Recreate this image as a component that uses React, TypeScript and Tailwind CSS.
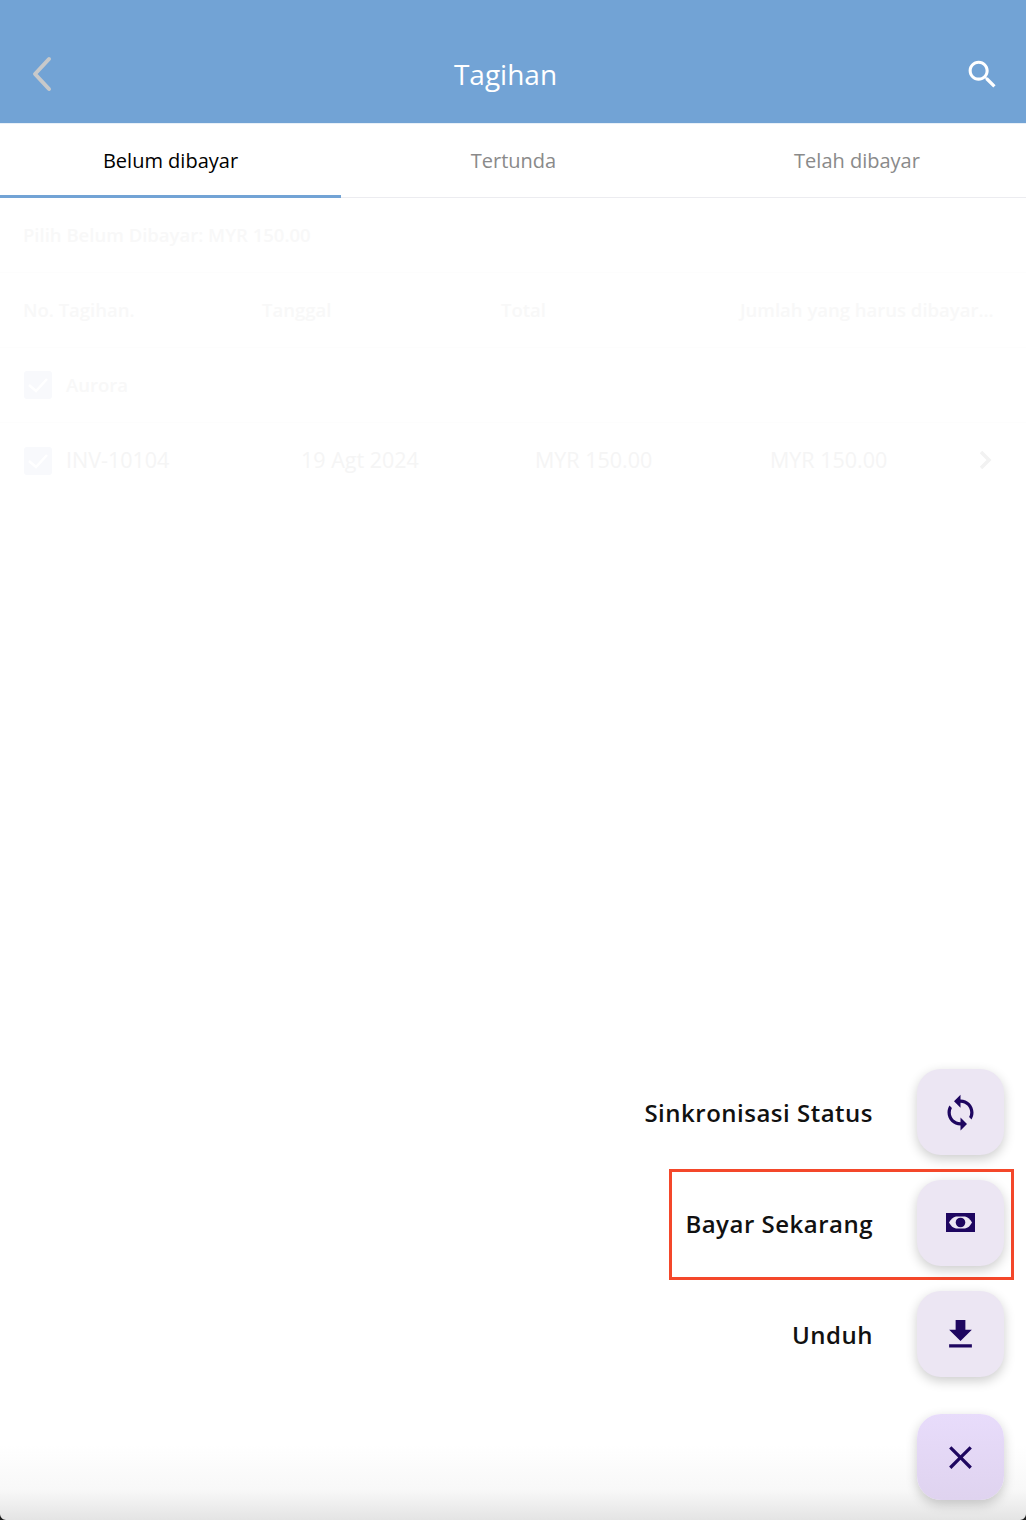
import React from 'react'

const tabs = ['Belum dibayar', 'Tertunda', 'Telah dibayar']

const actions = [
    {
        label: 'Sinkronisasi Status',
        highlight: false,
        icon: 'M12 4V1L8 5l4 4V6c3.31 0 6 2.69 6 6 0 1.01-.25 1.97-.7 2.8l1.46 1.46C19.54 15.03 20 13.57 20 12c0-4.42-3.58-8-8-8zm0 14c-3.31 0-6-2.69-6-6 0-1.01.25-1.97.7-2.8L5.24 7.74C4.46 8.97 4 10.43 4 12c0 4.42 3.58 8 8 8v3l4-4-4-4v3z',
    },
    {
        label: 'Bayar Sekarang',
        highlight: true,
        icon: '',
    },
    {
        label: 'Unduh',
        highlight: false,
        icon: 'M19 9h-4V3H9v6H5l7 7 7-7zM5 18v2h14v-2H5z',
    },
]

const Check = () => (
    <div className="w-[28px] h-[28px] rounded-[3px] bg-[#f8f9fc] flex items-center justify-center shrink-0">
        <svg width="22" height="18" viewBox="0 0 22 18" fill="none" stroke="#ffffff" strokeWidth="2.5">
            <path d="M2 9l7 6L20 3" />
        </svg>
    </div>
)

const App = () => {
    return (
        <div className="relative w-[1026px] h-[1520px] overflow-hidden bg-white font-['Open_Sans',sans-serif]">
            <header className="h-[123px] bg-[#72a3d5] flex items-center justify-between pt-[26px] pr-[24px] pl-[30px]">
                <svg width="24" height="36" viewBox="0 0 24 36" fill="none" stroke="#c8c9ca" strokeWidth="4" strokeLinecap="round" strokeLinejoin="round" className="mt-[-2px]">
                    <path d="M19 3L5 18l14 15" />
                </svg>
                <h1 className="text-white text-[28px] leading-[36px] ml-[-7px] mt-[-2px]">Tagihan</h1>
                <svg width="37" height="37" viewBox="0 0 24 24" fill="#ffffff" className="mr-[1px]">
                    <path d="M15.5 14h-.79l-.28-.27C15.41 12.59 16 11.11 16 9.5 16 5.91 13.09 3 9.5 3S3 5.91 3 9.5 5.91 16 9.5 16c1.61 0 3.09-.59 4.23-1.57l.27.28v.79l5 4.99L20.49 19l-4.99-5zm-6 0C7.01 14 5 11.99 5 9.5S7.01 5 9.5 5 14 7.01 14 9.5 11.99 14 9.5 14z" />
                </svg>
            </header>

            <div className="grid grid-cols-3 h-[75px] border-b border-[#ececf0] border-t border-t-[#e8f0f8]">
                {tabs.map((tab, index) => (
                    <div
                        key={index}
                        className={index === 0
                            ? 'flex items-center justify-center text-[20px] text-black border-b-[3px] border-[#72a3d5] mb-[-1px] mr-[1px] pt-[2px]'
                            : index === 1
                                ? 'flex items-center justify-center text-[20px] text-[#8a8a8a] pt-[1px] pl-[1px]'
                                : 'flex items-center justify-center text-[20px] text-[#8a8a8a] pt-[1px] pl-[4px]'}
                    >
                        {tab}
                    </div>
                ))}
            </div>

            <div className="h-[75px] px-[23px] flex items-center border-b border-[#fdfdfd] text-[18.5px] font-semibold text-[#f8f8f8]">
                Pilih Belum Dibayar: MYR 150.00
            </div>
            <div className="h-[75px] px-[23px] grid grid-cols-[239px_239px_239px_1fr] items-center border-b border-[#fdfdfd] text-[18.5px] font-semibold text-[#f8f8f8]">
                <div>No. Tagihan.</div>
                <div>Tanggal</div>
                <div>Total</div>
                <div className="whitespace-nowrap">Jumlah yang harus dibayar...</div>
            </div>
            <div className="h-[75px] px-[24px] flex items-center gap-[14px] border-b border-[#fdfdfd] text-[18.5px] font-semibold text-[#f8f8f8]">
                <Check />
                <span>Aurora</span>
            </div>
            <div className="h-[75px] pl-[24px] pr-[34px] flex items-center gap-[14px] text-[21.5px] text-[#f5f5f5]">
                <Check />
                <div className="flex-1 grid grid-cols-[235px_234px_235px_1fr] items-center">
                    <div>INV-10104</div>
                    <div>19 Agt 2024</div>
                    <div>MYR 150.00</div>
                    <div className="flex items-center justify-between">
                        <span>MYR 150.00</span>
                        <svg width="13" height="20" viewBox="0 0 13 20" fill="none" stroke="#f2f2f2" strokeWidth="3.5" className="mt-[-2px]">
                            <path d="M2 2l8 8-8 8" />
                        </svg>
                    </div>
                </div>
            </div>

            {/* shade along the bottom of the screen */}
            <div className="absolute left-0 right-0 bottom-0 h-[75px] bg-gradient-to-b from-white/0 via-[#f8f8f8] via-60% to-[#e4e4e4]" />

            <div className="absolute right-[22px] bottom-[20px] flex flex-col items-end gap-[37px]">
                <div className="flex flex-col items-end gap-[25px]">
                    {actions.map((action, index) => (
                        <div key={index} className="relative flex items-center gap-[44px]">
                            {action.highlight && (
                                <div className="absolute w-[345px] right-[-10px] top-[-11px] bottom-[-14px] border-[3px] border-[#f4472a]" />
                            )}
                            <span className="relative text-[24px] leading-[32px] font-semibold text-[#111111] tracking-[0.5px] mt-[2px]">{action.label}</span>
                            <div className="relative w-[87px] h-[86px] rounded-[24px] bg-[#ece6f3] shadow-[0_4px_12px_rgba(0,0,0,0.2)] flex items-center justify-center">
                                {action.icon ? (
                                    <svg width="39" height="39" viewBox="0 0 24 24" fill="#1e0660">
                                        <path d={action.icon} />
                                    </svg>
                                ) : (
                                    <svg width="29" height="19" viewBox="0 0 29 19" className="mt-[-1px]">
                                        <rect width="29" height="19" fill="#1e0660" />
                                        <path d="M3 9.5C5 6 7 4 10 3.5h9c3 .5 5 2.5 7 6-2 3.5-4 5.5-7 6h-9c-3-.5-5-2.5-7-6z" fill="#ece6f3" />
                                        <circle cx="14.5" cy="9.5" r="4.8" fill="#1e0660" />
                                    </svg>
                                )}
                            </div>
                        </div>
                    ))}
                </div>
                <div className="w-[87px] h-[86px] rounded-[24px] bg-gradient-to-b from-[#e8dcfb] to-[#dfd3ef] shadow-[0_4px_12px_rgba(0,0,0,0.2)] flex items-center justify-center">
                    <svg width="39" height="39" viewBox="0 0 24 24" fill="#1e0660">
                        <path d="M19 6.41L17.59 5 12 10.59 6.41 5 5 6.41 10.59 12 5 17.59 6.41 19 12 13.41 17.59 19 19 17.59 13.41 12z" />
                    </svg>
                </div>
            </div>

            {/* rounded screen corners */}
            <svg width="6" height="6" viewBox="0 0 6 6" className="absolute left-0 bottom-0">
                <path d="M0 0C0 3 3 6 6 6H0z" fill="#1c1c1c" />
            </svg>
            <svg width="6" height="6" viewBox="0 0 6 6" className="absolute right-0 bottom-0">
                <path d="M6 0C6 3 3 6 0 6H6z" fill="#1c1c1c" />
            </svg>
        </div>
    )
}

export default App
